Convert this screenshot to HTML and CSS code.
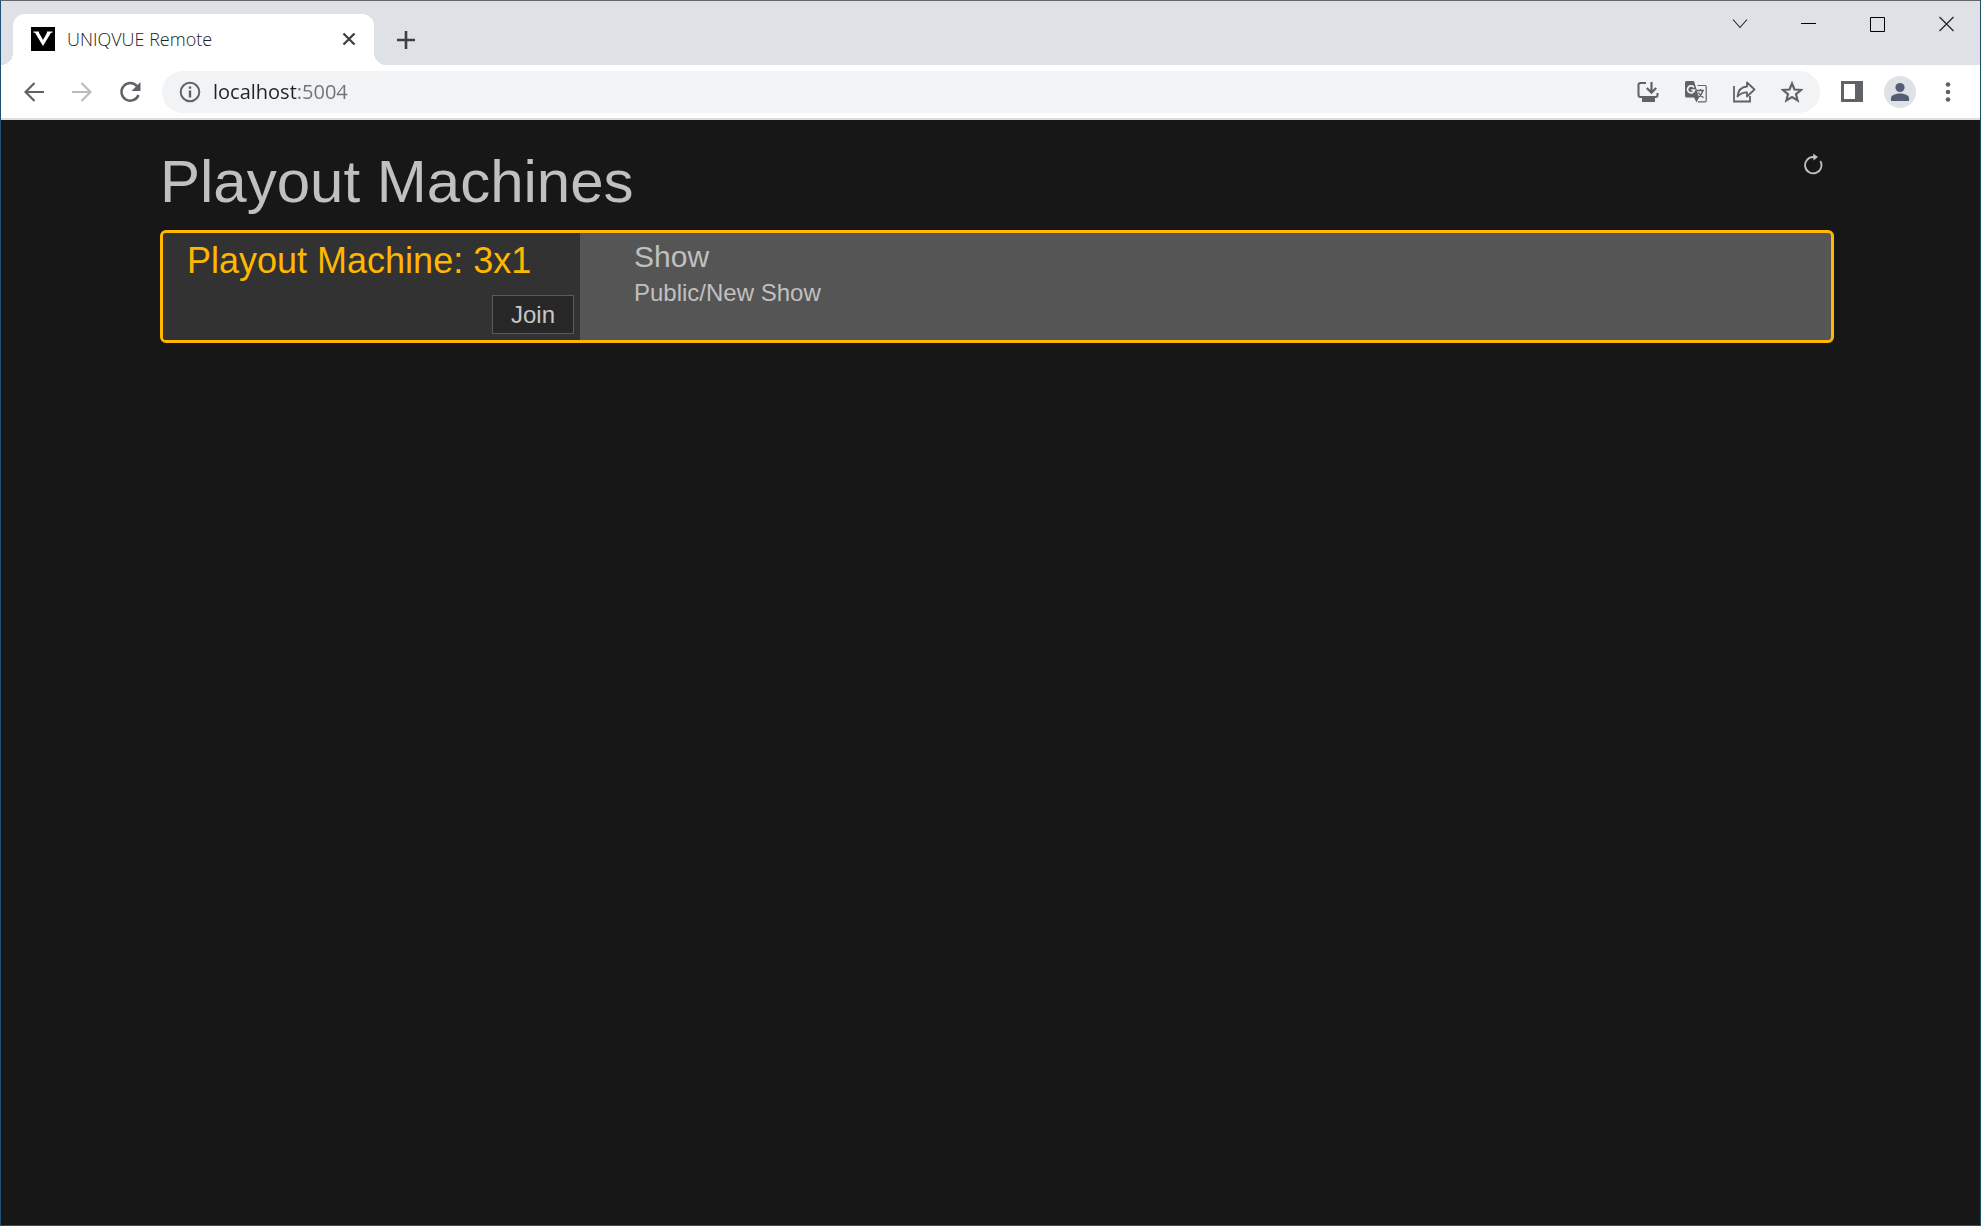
FILE: index.html
```html
<!DOCTYPE html>
<html lang="en">
<head>
<meta charset="utf-8">
<title>UNIQVUE Remote</title>
<link rel="stylesheet" href="styles.css">
</head>
<body>
<div class="window">
  <header class="tab-strip">
    <div class="tab">
      <svg class="favicon" viewBox="0 0 24 24" aria-hidden="true"><path fill="#000" d="M0 0h24v24H0z"/><path fill="#fff" d="M2.500 4.500H8v1.300L12 13l4-7.200V4.500h5.500v1.300H20L12 19 4 5.800H2.500z"/></svg>
      <span class="tab-title">UNIQVUE Remote</span>
      <button class="tab-close" aria-label="Close tab"><svg width="14" height="14" viewBox="0 0 14 14"><path d="M1.500 1.500l11 11m0-11l-11 11" stroke="#3c4043" stroke-width="2.300" fill="none"/></svg></button>
    </div>
    <button class="new-tab" aria-label="New tab"><svg width="20" height="20" viewBox="0 0 20 20"><path d="M10 1v18M1 10h18" stroke="#3c4043" stroke-width="2.600" fill="none"/></svg></button>
    <div class="window-controls">
      <button aria-label="Search tabs"><svg width="16" height="16" viewBox="0 0 16 16"><path d="M1 3.500l7 8 7-8" stroke="#222" stroke-width="1.100" fill="none"/></svg></button>
      <button aria-label="Minimize"><svg width="16" height="16" viewBox="0 0 16 16"><path d="M0 7.500h15" stroke="#000" fill="none"/></svg></button>
      <button aria-label="Maximize"><svg width="16" height="16" viewBox="0 0 16 16"><path d="M.5 1.500h14v14H.5z" stroke="#000" fill="none"/></svg></button>
      <button aria-label="Close"><svg width="16" height="16" viewBox="0 0 16 16"><path d="M.5 1l14 14m0-14l-14 14" stroke="#222" stroke-width="1.200" fill="none"/></svg></button>
    </div>
  </header>

  <nav class="toolbar" aria-label="Browser toolbar">
    <button class="tool" aria-label="Back"><svg width="20" height="20" viewBox="0 0 20 20"><path d="M20 10H2M10.500 1L1.500 10l9 9" stroke="#5f6368" stroke-width="2.200" fill="none"/></svg></button>
    <button class="tool" aria-label="Forward"><svg width="20" height="20" viewBox="0 0 20 20"><path d="M0 10h18M9.500 1l9 9-9 9" stroke="#babcbe" stroke-width="2.200" fill="none"/></svg></button>
    <button class="tool" aria-label="Reload"><svg width="22" height="22" viewBox="0 0 22 22"><path d="M18 5.200A8.800 8.800 0 1 0 19.500 14" stroke="#5f6368" stroke-width="2.500" fill="none"/><path d="M21.500 1v9h-9z" fill="#5f6368"/></svg></button>
    <div class="address">
      <svg class="site-info" width="22" height="22" viewBox="0 0 22 22" aria-hidden="true"><circle cx="11" cy="11" r="9.300" fill="none" stroke="#5f6368" stroke-width="2"/><path d="M11 5.500v2.300M11 9.500v7" stroke="#5f6368" stroke-width="2.400"/></svg>
      <input class="url" type="text" value="localhost:5004" aria-label="Address">
      <button class="tool" aria-label="Install app"><svg width="22" height="22" viewBox="0 0 22 22"><path d="M9 2H3.500Q1.500 2 1.500 4v10q0 2 2 2h15q2 0 2-2v-2" fill="none" stroke="#5f6368" stroke-width="2"/><path d="M5 17h13v4H5z" fill="#5f6368"/><path d="M14.500 1v10M9.800 7l4.700 4.800L19.200 7" fill="none" stroke="#5f6368" stroke-width="2.200"/></svg></button>
      <button class="tool" aria-label="Translate"><svg width="22" height="22" viewBox="0 0 22 22"><path d="M12.500 4.500H20q1.200 0 1.200 1.200v14q0 1.200-1.200 1.200h-7" fill="none" stroke="#5f6368" stroke-width="1.200"/><path d="M1.500 0H9l5 16.500H1.500Q0 16.500 0 15V1.500Q0 0 1.500 0zM9 16.500h5l-2.500 5z" fill="#5f6368"/><path d="M9 6.500A3.500 3.500 0 1 0 9.500 9H6.200" fill="none" stroke="#f1f3f4" stroke-width="1.700"/><path d="M12 9.500h7M15.500 8v1.500M17.800 9.500q-1.200 4.800-4.600 7M13.500 11.500q1.500 3.500 5 5.200" fill="none" stroke="#5f6368" stroke-width="1.300"/></svg></button>
      <button class="tool" aria-label="Share"><svg width="24" height="22" viewBox="0 0 24 22"><path d="M2 5v15.500h16V15" fill="none" stroke="#5f6368" stroke-width="1.800"/><path d="M5.500 15.500C6 9.500 9 6 15 5.500V1.500L22.500 8.500 15 15.500v-4.200c-4.500 0-7 1.200-9.500 4.200z" fill="none" stroke="#5f6368" stroke-width="1.800" stroke-linejoin="round"/></svg></button>
      <button class="tool" aria-label="Bookmark"><svg width="22" height="22" viewBox="0 0 22 22"><path d="M11 2.500l2.500 6 6.500.5-5 4.200 1.600 6.300-5.600-3.400-5.600 3.400L7 13.200 2 9l6.500-.5z" fill="none" stroke="#5f6368" stroke-width="2.200"/></svg></button>
    </div>
    <button class="tool" aria-label="Side panel"><svg width="22" height="22" viewBox="0 0 22 22"><path d="M0 0h22v21H0zM3 3v15h11V3z" fill="#5f6368" fill-rule="evenodd"/></svg></button>
    <button class="tool avatar" aria-label="Profile"><svg width="20" height="20" viewBox="0 0 20 20"><circle cx="10" cy="5.500" r="4.600" fill="#535e75"/><path d="M1 19v-3c0-3 5-4.500 9-4.500s9 1.500 9 4.500v3z" fill="#535e75"/></svg></button>
    <button class="tool" aria-label="Menu"><svg width="6" height="20" viewBox="0 0 6 20"><g fill="#5f6368"><circle cx="3" cy="2.500" r="2.300"/><circle cx="3" cy="10" r="2.300"/><circle cx="3" cy="17.500" r="2.300"/></g></svg></button>
  </nav>

  <main class="page">
    <div class="page-head">
      <h1>Playout Machines</h1>
      <button class="refresh" aria-label="Refresh"><svg width="20" height="22" viewBox="0 0 20 22"><path d="M12 4H10.500A8.200 8.200 0 1 0 17.300 8" fill="none" stroke="#c0c0c0" stroke-width="1.800"/><path d="M10 .5l5 3.500-4.500 3.500z" fill="#c0c0c0"/></svg></button>
    </div>
    <section class="machine">
      <div class="machine-info">
        <h2>Playout Machine: 3x1</h2>
        <button class="join">Join</button>
      </div>
      <div class="show">
        <h3>Show</h3>
        <p>Public/New Show</p>
      </div>
    </section>
  </main>
</div>
</body>
</html>
```
FILE: styles.css
```css
* {
  box-sizing: border-box;
}

body {
  margin: 0;
  font-family: "Liberation Sans", Arial, sans-serif;
}

button {
  display: flex;
  align-items: center;
  justify-content: center;
  padding: 0;
  border: 0;
  background: none;
  font: inherit;
}

h1, h2, h3, p {
  margin: 0;
  font-weight: 400;
}

.window {
  display: flex;
  flex-direction: column;
  min-height: 100vh;
  border: 1px solid #1d5272;
  border-top-color: #646669;
  background: #171717;
}

.tab-strip {
  display: flex;
  align-items: flex-end;
  height: 64px;
  padding-left: 12px;
  background: #dee1e6;
}

.tab {
  position: relative;
  display: flex;
  align-items: center;
  width: 361px;
  height: 51px;
  padding: 0 16px 2px 18px;
  border-radius: 12px 12px 0 0;
  background: #fff;
}

.tab::before,
.tab::after {
  content: "";
  position: absolute;
  bottom: 0;
  width: 12px;
  height: 12px;
}

.tab::before {
  right: 100%;
  background: radial-gradient(circle at 0 0, transparent 12px, #fff 12px);
}

.tab::after {
  left: 100%;
  background: radial-gradient(circle at 100% 0, transparent 12px, #fff 12px);
}

.favicon {
  width: 24px;
  height: 24px;
}

.tab-title {
  flex: 1;
  padding-left: 12px;
  font: 300 18px/24px "Open Sans", "Noto Sans", sans-serif;
  color: #202124;
}

.tab-close {
  width: 18px;
  height: 24px;
}

.new-tab {
  width: 32px;
  height: 51px;
  margin-left: 16px;
}

.window-controls {
  display: flex;
  align-self: flex-start;
  margin-left: auto;
}

.window-controls button {
  width: 69px;
  height: 45px;
  padding-left: 2px;
}

.toolbar {
  display: flex;
  align-items: center;
  gap: 16px;
  height: 55px;
  padding: 0 16px 0 17px;
  border-bottom: 2px solid #dcdee0;
  background: #fff;
}

.tool {
  flex: none;
  width: 32px;
  height: 32px;
}

.address {
  display: flex;
  flex: 1;
  align-items: center;
  gap: 16px;
  height: 42px;
  padding: 0 12px 0 17px;
  border-radius: 21px;
  background: #f1f3f4;
}

.site-info {
  flex: none;
}

.url {
  flex: 1;
  min-width: 0;
  margin-left: -4px;
  padding: 0;
  border: 0;
  font: 400 20px/28px "Open Sans", "Noto Sans", sans-serif;
  color: transparent;
  background: linear-gradient(to right, #202124 84px, #6f7276 84px);
  -webkit-background-clip: text;
  background-clip: text;
}

.avatar {
  border-radius: 50%;
  background: #dee1e6;
}

.page {
  flex: 1;
  padding: 26px 146px 26px 159px;
  color: #c0c0c0;
}

.page-head {
  display: flex;
  justify-content: space-between;
  align-items: flex-start;
  padding-right: 10px;
}

h1 {
  font-size: 60px;
  line-height: 72px;
}

.refresh {
  width: 22px;
  height: 36px;
}

.machine {
  display: grid;
  grid-template-columns: 1fr 3fr;
  margin-top: 12px;
  overflow: hidden;
  border: 3px solid #ffb700;
  border-radius: 6px;
  background: #555;
}

.machine-info {
  display: flex;
  flex-direction: column;
  gap: 12px;
  padding: 6px 6px 6px 24px;
  background: #323232;
}

h2 {
  font-size: 36px;
  line-height: 44px;
  color: #ffb700;
}

.join {
  align-self: flex-end;
  width: 82px;
  height: 39px;
  border: 1px solid #5a5a5a;
  background: #272727;
  font-size: 24px;
  color: #c8c8c8;
}

.show {
  padding: 5px 54px;
}

h3 {
  font-size: 30px;
  line-height: 38px;
}

.show p {
  font-size: 24px;
  line-height: 34px;
}
```
